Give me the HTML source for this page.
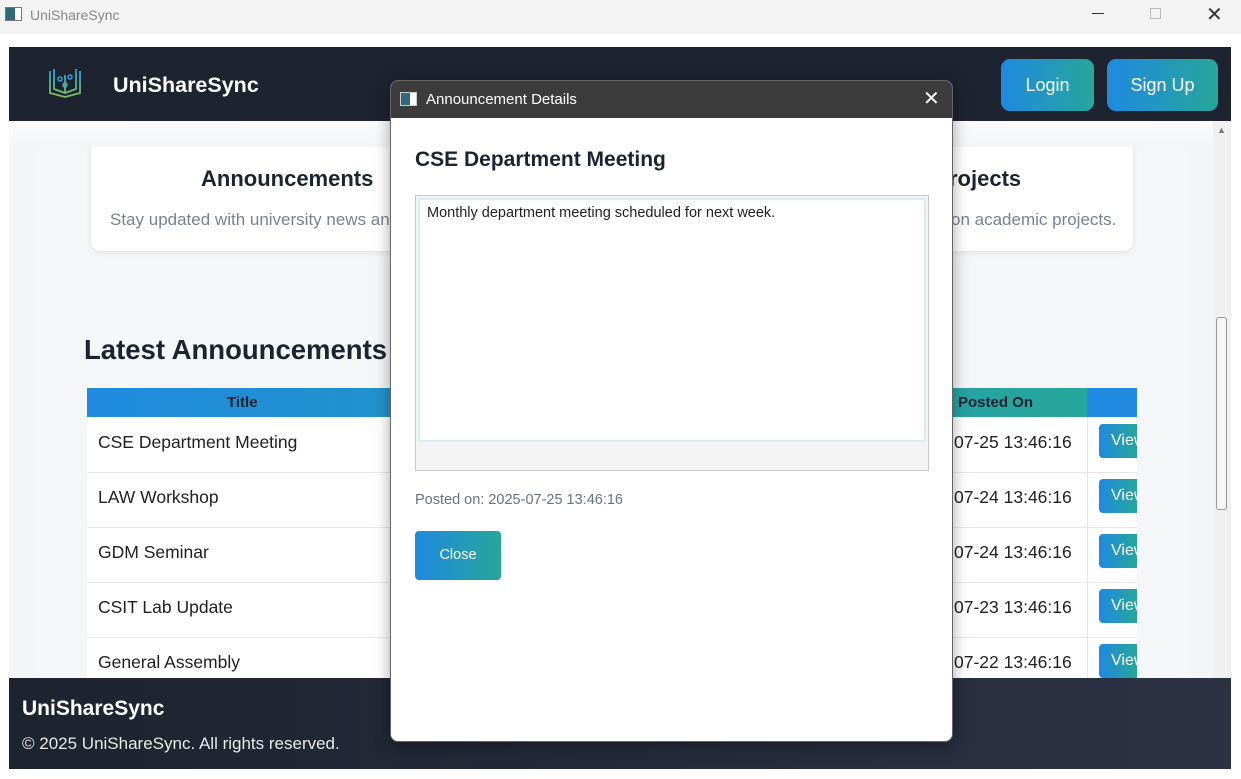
<!DOCTYPE html>
<html><head><style>
*{box-sizing:border-box;margin:0;padding:0}
body{width:1241px;height:779px;overflow:hidden;background:#f3f3f3;font-family:"Liberation Sans",sans-serif;position:relative}
.abs{position:absolute}
.grad{background:linear-gradient(90deg,#1f8ae0,#27a69a)}
.r{font-size:17.5px;color:#222}
</style></head><body>
<div class="abs" style="left:0;top:0;width:1241px;height:34px;background:#f3f3f3">
 <div class="abs" style="left:5px;top:7px;width:17px;height:14px;border:1px solid #777;background:linear-gradient(90deg,#2d6a7a 60%,#fff 60%)"></div>
 <div class="abs" style="left:30px;top:7px;font-size:14px;color:#888">UniShareSync</div>
 <div class="abs" style="left:1092px;top:13px;width:12px;height:1px;background:#333"></div>
 <div class="abs" style="left:1150px;top:8px;width:11px;height:11px;border:1px solid #bbb"></div>
 <div class="abs" style="left:1206px;top:2px;font-size:20px;color:#333">✕</div>
</div>
<div class="abs" style="left:0;top:34px;width:1241px;height:745px;background:#fff"></div>
<div class="abs" style="left:9px;top:47px;width:1222px;height:74px;background:#1e2330">
 <svg class="abs" style="left:38px;top:20px" width="36" height="32" viewBox="0 0 36 32"><defs><linearGradient id="g" x1="0" y1="0" x2="0" y2="1"><stop offset="0" stop-color="#2aa0e0"/><stop offset="1" stop-color="#7bc05a"/></linearGradient></defs><path d="M3 4v22l15 4 15-4V4M7 2v20l11 4 11-4V2M18 8v18" fill="none" stroke="url(#g)" stroke-width="1.8"/><circle cx="13" cy="12" r="2" fill="none" stroke="#2aa0e0" stroke-width="1.5"/><circle cx="23" cy="10" r="2" fill="none" stroke="#2aa0e0" stroke-width="1.5"/><circle cx="18" cy="18" r="2" fill="none" stroke="#4ab0a0" stroke-width="1.5"/></svg>
 <div class="abs" style="left:104px;top:26px;font-size:21.5px;font-weight:bold;color:#fff">UniShareSync</div>
 <div class="abs grad" style="left:992px;top:12px;width:93px;height:52px;border-radius:9px;color:#fff;font-size:18px;text-align:center;line-height:52px">Login</div>
 <div class="abs grad" style="left:1098px;top:12px;width:111px;height:52px;border-radius:9px;color:#fff;font-size:18px;text-align:center;line-height:52px">Sign Up</div>
</div>
<div class="abs" style="left:9px;top:121px;width:1204px;height:557px;background:#f4f5f7;overflow:hidden">
 <div class="abs" style="left:25px;top:26px;width:1156px;height:531px;background:#f5f6f8"></div>
 <div class="abs" style="left:82px;top:0;width:1042px;height:130px;background:#fff;border-radius:10px;box-shadow:0 2px 6px rgba(0,0,0,.08)"></div>
 <div class="abs" style="left:0;top:0;width:1204px;height:26px;background:linear-gradient(180deg,#fbfbfc,#f4f5f7)"></div>
 <div class="abs" style="left:192px;top:45px;font-size:22px;font-weight:bold;color:#1e2330">Announcements</div>
 <div class="abs" style="left:101px;top:89px;font-size:17px;color:#7a8290">Stay updated with university news and</div>
 <div class="abs" style="left:940px;top:45px;font-size:22px;font-weight:bold;color:#1e2330">rojects</div>
 <div class="abs" style="left:942px;top:89px;font-size:17px;color:#7a8290">on academic projects.</div>
 <div class="abs" style="left:75px;top:213px;font-size:27.5px;font-weight:bold;color:#1e2330">Latest Announcements</div>
 <div class="abs grad" style="left:78px;top:267px;width:1000px;height:29px"></div>
 <div class="abs" style="left:1078px;top:267px;width:50px;height:29px;background:#1f8ae0"></div>
 <div class="abs" style="left:218px;top:273px;font-size:15px;font-weight:bold;color:#1e2330">Title</div>
 <div class="abs" style="left:949px;top:273px;font-size:15px;font-weight:bold;color:#1e2330">Posted On</div>
 <div class="abs" style="left:78px;top:296px;width:1050px;height:300px;background:#fff"></div>
 <div class="abs r" style="left:89px;top:311px">CSE Department Meeting</div>
 <div class="abs r" style="left:89px;top:366px">LAW Workshop</div>
 <div class="abs r" style="left:89px;top:421px">GDM Seminar</div>
 <div class="abs r" style="left:89px;top:476px">CSIT Lab Update</div>
 <div class="abs r" style="left:89px;top:531px">General Assembly</div>
 <div class="abs" style="left:78px;top:351px;width:1050px;height:1px;background:#e8e8e8"></div>
 <div class="abs" style="left:78px;top:406px;width:1050px;height:1px;background:#e8e8e8"></div>
 <div class="abs" style="left:78px;top:461px;width:1050px;height:1px;background:#e8e8e8"></div>
 <div class="abs" style="left:78px;top:516px;width:1050px;height:1px;background:#e8e8e8"></div>
 <div class="abs" style="left:1078px;top:296px;width:1px;height:270px;background:#e8e8e8"></div>
 <div class="abs r" style="left:945px;top:311px">07-25 13:46:16</div>
 <div class="abs r" style="left:945px;top:366px">07-24 13:46:16</div>
 <div class="abs r" style="left:945px;top:421px">07-24 13:46:16</div>
 <div class="abs r" style="left:945px;top:476px">07-23 13:46:16</div>
 <div class="abs r" style="left:945px;top:531px">07-22 13:46:16</div>
 <div class="abs grad" style="left:1090px;top:303px;width:38px;height:34px;border-radius:4px 0 0 4px;color:#fff;font-size:16px;padding:8px 0 0 12px;overflow:hidden">View</div>
 <div class="abs grad" style="left:1090px;top:358px;width:38px;height:34px;border-radius:4px 0 0 4px;color:#fff;font-size:16px;padding:8px 0 0 12px;overflow:hidden">View</div>
 <div class="abs grad" style="left:1090px;top:413px;width:38px;height:34px;border-radius:4px 0 0 4px;color:#fff;font-size:16px;padding:8px 0 0 12px;overflow:hidden">View</div>
 <div class="abs grad" style="left:1090px;top:468px;width:38px;height:34px;border-radius:4px 0 0 4px;color:#fff;font-size:16px;padding:8px 0 0 12px;overflow:hidden">View</div>
 <div class="abs grad" style="left:1090px;top:523px;width:38px;height:34px;border-radius:4px 0 0 4px;color:#fff;font-size:16px;padding:8px 0 0 12px;overflow:hidden">View</div>
</div>
<div class="abs" style="left:1213px;top:121px;width:18px;height:557px;background:#f0f0f0">
 <div class="abs" style="left:4px;top:4px;font-size:9px;color:#777">▲</div>
 <div class="abs" style="left:3px;top:196px;width:11px;height:193px;border:1px solid #999;border-radius:3px;background:#f6f6f6"></div>
</div>
<div class="abs" style="left:9px;top:678px;width:1222px;height:91px;background:linear-gradient(90deg,#1e2330,#2a3244)">
 <div class="abs" style="left:13px;top:19px;font-size:21px;font-weight:bold;color:#fff">UniShareSync</div>
 <div class="abs" style="left:13px;top:56px;font-size:17px;color:#e8e8e8">© 2025 UniShareSync. All rights reserved.</div>
</div>
<div class="abs" style="left:390px;top:80px;width:563px;height:662px;background:#fff;border-radius:8px;box-shadow:0 4px 16px rgba(0,0,0,.35);overflow:hidden;border:1px solid #666">
 <div class="abs" style="left:0;top:0;width:563px;height:37px;background:#3c3c3c">
  <div class="abs" style="left:9px;top:11px;width:17px;height:14px;border:1px solid #ccc;background:linear-gradient(90deg,#2d6a7a 60%,#fff 60%)"></div>
  <div class="abs" style="left:35px;top:10px;font-size:15px;color:#fff">Announcement Details</div>
  <div class="abs" style="left:532px;top:5px;font-size:20px;color:#fff">✕</div>
 </div>
 <div class="abs" style="left:24px;top:67px;font-size:21px;font-weight:bold;color:#1e2330">CSE Department Meeting</div>
 <div class="abs" style="left:24px;top:114px;width:514px;height:276px;border:1px solid #c8c8c8;background:#f4f4f4">
  <div class="abs" style="left:2px;top:2px;width:508px;height:244px;background:#fff;border:2px solid #d6ebf5"></div>
  <div class="abs" style="left:11px;top:9px;font-size:14.5px;color:#222">Monthly department meeting scheduled for next week.</div>
 </div>
 <div class="abs" style="left:24px;top:411px;font-size:14.5px;color:#6b7280">Posted on: 2025-07-25 13:46:16</div>
 <div class="abs grad" style="left:24px;top:450px;width:86px;height:49px;border-radius:4px;color:#fff;font-size:14.5px;text-align:center;line-height:49px">Close</div>
</div>
</body></html>
